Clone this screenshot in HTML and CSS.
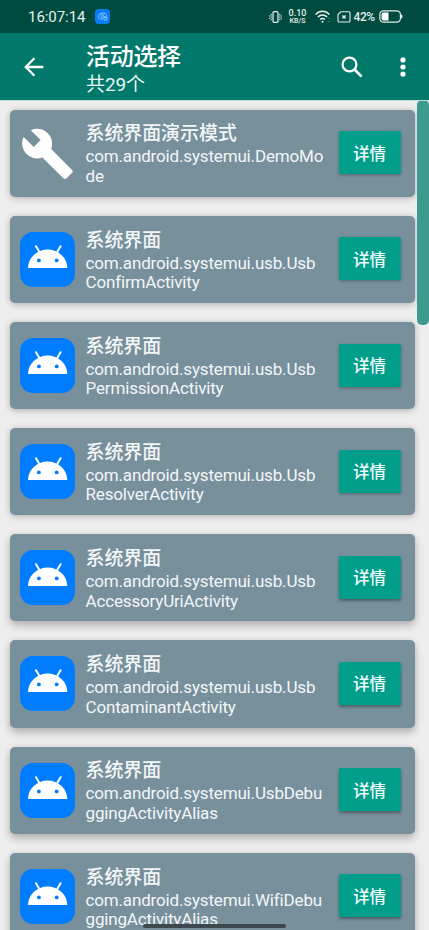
FILE: index.html
```html
<!DOCTYPE html>
<html lang="zh-CN">
<head>
<meta charset="utf-8">
<title>活动选择</title>
<link rel="stylesheet" href="styles.css">
</head>
<body>
<svg class="defs" width="0" height="0" aria-hidden="true">
  <symbol id="robot" viewBox="0 0 55 55">
    <rect width="55" height="55" rx="13" fill="#007dff"/>
    <path d="M16 14.200l4 6.700M40.600 14.200l-4 6.700" stroke="#fff" stroke-width="2" stroke-linecap="round"/>
    <path d="M8 36A19.650 18.400 0 0 1 47.300 36z" fill="#fff"/>
    <circle cx="18.900" cy="28.400" r="1.900" fill="#007dff"/><circle cx="36.700" cy="28.400" r="1.900" fill="#007dff"/>
  </symbol>
</svg>
<div class="screen">
  <div class="status">
    <span class="clock">16:07:14</span>
    <svg class="badge" width="15" height="15" viewBox="0 0 15 15"><rect width="15" height="15" rx="4" fill="#087cf4"/><path d="M8 10H5.500C4 9.500 3 8.500 3 7c1-2 2.500-3 4.500-3S11 5 12 7" fill="none" stroke="#9bcbff" stroke-width=".9"/><circle cx="7.200" cy="7" r="1.500" fill="none" stroke="#9bcbff" stroke-width=".8"/><path d="M9 8.500h3V11H9zM9.700 8.500v-1h1.600v1" fill="none" stroke="#9bcbff" stroke-width=".8"/></svg>
    <div class="indicators">
      <svg width="13" height="12" viewBox="0 0 13 12" fill="none" stroke="#e4efed"><rect x="4" y=".7" width="5" height="10.600" rx="1" stroke-width="1.200"/><path d="M2.200 2.800v1.700M.8 4.300v1.400M2.200 5.500v1.400M.8 6.700v1.400M2.200 7.900v1.400M10.800 2.800v1.700M12.200 4.300v1.400M10.800 5.500v1.400M12.200 6.700v1.400M10.800 7.900v1.400" stroke-width="1"/></svg>
      <div class="speed"><span>0.10</span><span>KB/S</span></div>
      <svg class="wifi" width="16" height="13" viewBox="0 0 16 13" fill="none" stroke="#e4efed" stroke-width="1.500"><path d="M.6 4.400c4-4.200 9.800-4.200 13.800 0M2.900 7.100c2.700-2.800 6.500-2.800 9.200 0M5.100 9.600c1.400-1.500 3.400-1.500 4.800 0"/><circle cx="7.500" cy="11.700" r="1" fill="#e4efed" stroke="none"/><path d="M12.800 9l1.200-1.200L15.200 9M12.800 11l1.200 1.200 1.200-1.200" stroke="#4c827b" stroke-width=".8"/></svg>
      <svg class="sim" width="14" height="12" viewBox="0 0 14 12" fill="none" stroke="#e4efed" stroke-width="1.100"><path d="M3.800.8H12Q13 .8 13 1.800V10Q13 11 12 11H2Q1 11 1 10V3.600z"/><path d="M5.400 4.400l3.200 3.200M8.600 4.400L5.400 7.600" stroke-width="1.400"/></svg>
      <span class="percent">42%</span>
      <svg class="battery" width="24" height="13" viewBox="0 0 24 13"><rect x=".8" y=".8" width="20.600" height="11.400" rx="3.600" fill="none" stroke="#e4efed" stroke-width="1.200"/><path d="M4.700 2.500H9.500v8H4.700Q2.500 10.500 2.500 8.300V4.700Q2.500 2.500 4.700 2.500z" fill="#fff"/><path d="M22.700 4.700v3.600" stroke="#e4efed" stroke-width="1.300"/></svg>
    </div>
  </div>
  <header class="toolbar">
    <svg class="back" width="20" height="20" viewBox="0 0 20 20" fill="none" stroke="#fff" stroke-width="2.300"><path d="M19.300 10H2.200M10.400 1.200L1.800 10l8.600 8.800"/></svg>
    <div class="heading"><h1>活动选择</h1><p>共29个</p></div>
    <svg class="search" width="22" height="22" viewBox="0 0 22 22" fill="none" stroke="#fff"><circle cx="8.500" cy="8.500" r="6.900" stroke-width="2.200"/><path d="M13.300 13.300l7.300 7.300" stroke-width="2.700"/></svg>
    <svg class="more" width="6" height="20" viewBox="0 0 6 20" fill="#fff"><circle cx="3" cy="2.900" r="2.600"/><circle cx="3" cy="10" r="2.600"/><circle cx="3" cy="17.100" r="2.600"/></svg>
  </header>
  <main class="list">
    <article class="card"><svg class="icon" viewBox="0 0 24 24"><path transform="translate(0 .15)" fill="#fff" d="M22.700 19l-9.100-9.100c.9-2.300.4-5-1.500-6.900-2-2-5-2.400-7.400-1.300L9 6 6 9 1.600 4.700C.4 7.100.9 10.100 2.900 12.100c1.900 1.900 4.600 2.400 6.900 1.500l9.100 9.100c.4.400 1 .4 1.400 0l2.300-2.300c.5-.4.500-1.100.1-1.400z"/></svg><div class="info"><h2>系统界面演示模式</h2><p>com.android.systemui.DemoMo<br>de</p></div><button class="detail">详情</button></article>
    <article class="card"><svg class="icon"><use href="#robot"/></svg><div class="info"><h2>系统界面</h2><p>com.android.systemui.usb.Usb<br>ConfirmActivity</p></div><button class="detail">详情</button></article>
    <article class="card"><svg class="icon"><use href="#robot"/></svg><div class="info"><h2>系统界面</h2><p>com.android.systemui.usb.Usb<br>PermissionActivity</p></div><button class="detail">详情</button></article>
    <article class="card"><svg class="icon"><use href="#robot"/></svg><div class="info"><h2>系统界面</h2><p>com.android.systemui.usb.Usb<br>ResolverActivity</p></div><button class="detail">详情</button></article>
    <article class="card low"><svg class="icon"><use href="#robot"/></svg><div class="info"><h2>系统界面</h2><p>com.android.systemui.usb.Usb<br>AccessoryUriActivity</p></div><button class="detail">详情</button></article>
    <article class="card low"><svg class="icon"><use href="#robot"/></svg><div class="info"><h2>系统界面</h2><p>com.android.systemui.usb.Usb<br>ContaminantActivity</p></div><button class="detail">详情</button></article>
    <article class="card low"><svg class="icon"><use href="#robot"/></svg><div class="info"><h2>系统界面</h2><p>com.android.systemui.UsbDebu<br>ggingActivityAlias</p></div><button class="detail">详情</button></article>
    <article class="card low"><svg class="icon"><use href="#robot"/></svg><div class="info"><h2>系统界面</h2><p>com.android.systemui.WifiDebu<br>ggingActivityAlias</p></div><button class="detail">详情</button></article>
    <div class="scrollbar"></div>
  </main>
  <div class="gesture"></div>
</div>
</body>
</html>
```
FILE: styles.css
```css
* { box-sizing: border-box; }
body, h1, h2, p { margin: 0; }
body { font-family: Roboto, "Noto Sans CJK SC", sans-serif; background: #eee; overflow: hidden; }
svg { display: block; flex: none; }
.defs { position: absolute; }
.screen { position: relative; width: 429px; height: 930px; overflow: hidden; display: flex; flex-direction: column; }
.status { height: 33px; flex: none; background: #004b40; color: #e4efed; display: flex; align-items: center; padding: 0 26.500px 0 28px; }
.clock { font-size: 15px; width: 57px; white-space: nowrap; letter-spacing: -.05px; }
.badge { margin-left: 10px; }
.indicators { margin-left: auto; display: flex; align-items: center; }
.speed { width: 18px; margin-left: 7px; padding-top: 1px; display: flex; flex-direction: column; align-items: center; font-weight: 500; font-size: 9px; line-height: 9px; }
.speed span:last-child { font-size: 7px; line-height: 7px; }
.wifi { margin-left: 8px; }
.sim { margin-left: 6px; }
.percent { width: 22px; margin-left: 3px; font-size: 12px; font-weight: 500; letter-spacing: -.4px; }
.battery { margin-left: 3px; }
.toolbar { height: 67px; flex: none; background: #00796b; color: #fff; display: flex; align-items: center; padding: 0 23px 0 24px; }
.heading { margin-left: 42px; padding-top: 6px; }
.heading h1 { font-size: 24px; line-height: 30px; font-weight: 500; letter-spacing: -.3px; }
.heading p { font-size: 19px; line-height: 26px; color: #edf6f5; letter-spacing: -.1px; }
.search { margin-left: auto; }
.more { margin-left: 37px; }
.list { position: relative; flex: 1; min-height: 0; overflow: hidden; display: flex; flex-direction: column; gap: 18.970px; padding: 8.600px 14.500px 0 9.500px; border-top: 1px solid #bfe0dc; background: #eee; }
.card { height: 87.200px; flex: none; display: flex; align-items: center; padding: 0 14px 0 10.500px; border-radius: 5px; background: #78909c; color: #f3f6f7; box-shadow: 0 2px 7px rgba(0,0,0,.18), 0 0 6px rgba(0,0,0,.1); }
.card.low { box-shadow: 0 5px 9px rgba(0,0,0,.22), 0 0 6px rgba(0,0,0,.1); }
.icon { width: 55px; height: 55px; }
.info { flex: 1; margin-left: 10.500px; padding-top: 1.500px; min-width: 0; white-space: nowrap; }
.info h2 { font-size: 19px; line-height: 26px; font-weight: 500; letter-spacing: -.1px; }
.info p { font-size: 17px; line-height: 19.500px; letter-spacing: -.16px; }
.detail { width: 62px; height: 43px; flex: none; margin-bottom: 1px; border: 0; padding: 0; border-radius: 2px; background: #009e8b; color: #f0faf8; font: 500 16.500px Roboto, "Noto Sans CJK SC", sans-serif; box-shadow: 0 1px 3px rgba(0,0,0,.3); }
.low .detail { box-shadow: 0 2px 3px rgba(0,0,0,.35); }
.scrollbar { position: absolute; top: -1px; right: 0; width: 12px; height: 225px; border-radius: 5px; background: #3c9a8e; }
.gesture { position: absolute; left: 143px; top: 924px; width: 143px; height: 4px; border-radius: 2px; background: #3d474d; }
```
